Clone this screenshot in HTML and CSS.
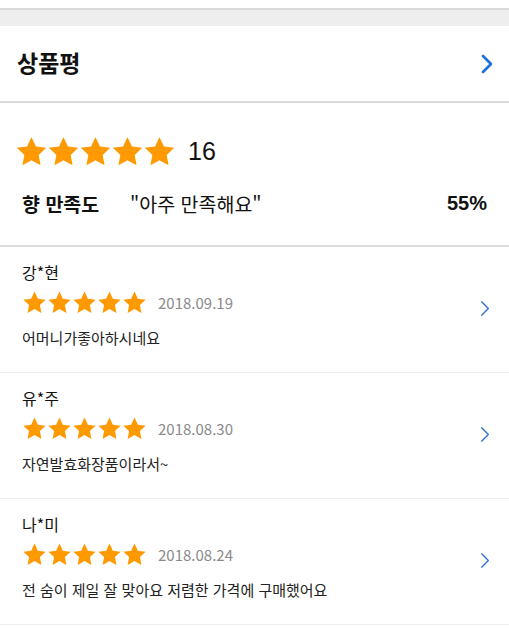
FILE: index.html
```html
<!DOCTYPE html>
<html lang="ko">
  <head>
    <meta charset="UTF-8" />
    <title>상품평</title>
    <link rel="stylesheet" href="styles.css">
  </head>
  <body>
    <div class="gap"></div>

    <a class="header">
      <h2>상품평</h2>
      <svg class="chev big" viewBox="0 0 12 20"><path d="M2 2 L10 10 L2 18" /></svg>
    </a>

    <div class="summary">
      <div class="score">
        <div class="stars big">
          <svg viewBox="0 0 24 24"><path d="M12 1.5l3.2 6.9 7.5.9-5.5 5.2 1.4 7.5L12 18.3 5.4 22l1.4-7.5L1.3 9.3l7.5-.9z"/></svg>
          <svg viewBox="0 0 24 24"><path d="M12 1.5l3.2 6.9 7.5.9-5.5 5.2 1.4 7.5L12 18.3 5.4 22l1.4-7.5L1.3 9.3l7.5-.9z"/></svg>
          <svg viewBox="0 0 24 24"><path d="M12 1.5l3.2 6.9 7.5.9-5.5 5.2 1.4 7.5L12 18.3 5.4 22l1.4-7.5L1.3 9.3l7.5-.9z"/></svg>
          <svg viewBox="0 0 24 24"><path d="M12 1.5l3.2 6.9 7.5.9-5.5 5.2 1.4 7.5L12 18.3 5.4 22l1.4-7.5L1.3 9.3l7.5-.9z"/></svg>
          <svg viewBox="0 0 24 24"><path d="M12 1.5l3.2 6.9 7.5.9-5.5 5.2 1.4 7.5L12 18.3 5.4 22l1.4-7.5L1.3 9.3l7.5-.9z"/></svg>
        </div>
        <span class="count">16</span>
      </div>
      <div class="scent">
        <span class="label">향 만족도</span>
        <span class="answer">"아주 만족해요"</span>
        <span class="pct">55%</span>
      </div>
    </div>

    <ul class="reviews">
      <li class="review">
        <div class="body">
          <p class="name">강*현</p>
          <div class="meta">
            <div class="stars">
              <svg viewBox="0 0 24 24"><path d="M12 1.5l3.2 6.9 7.5.9-5.5 5.2 1.4 7.5L12 18.3 5.4 22l1.4-7.5L1.3 9.3l7.5-.9z"/></svg>
              <svg viewBox="0 0 24 24"><path d="M12 1.5l3.2 6.9 7.5.9-5.5 5.2 1.4 7.5L12 18.3 5.4 22l1.4-7.5L1.3 9.3l7.5-.9z"/></svg>
              <svg viewBox="0 0 24 24"><path d="M12 1.5l3.2 6.9 7.5.9-5.5 5.2 1.4 7.5L12 18.3 5.4 22l1.4-7.5L1.3 9.3l7.5-.9z"/></svg>
              <svg viewBox="0 0 24 24"><path d="M12 1.5l3.2 6.9 7.5.9-5.5 5.2 1.4 7.5L12 18.3 5.4 22l1.4-7.5L1.3 9.3l7.5-.9z"/></svg>
              <svg viewBox="0 0 24 24"><path d="M12 1.5l3.2 6.9 7.5.9-5.5 5.2 1.4 7.5L12 18.3 5.4 22l1.4-7.5L1.3 9.3l7.5-.9z"/></svg>
            </div>
            <span class="date">2018.09.19</span>
          </div>
          <p class="text">어머니가좋아하시네요</p>
        </div>
        <svg class="chev" viewBox="0 0 12 20"><path d="M2 2 L10 10 L2 18" /></svg>
      </li>
      <li class="review">
        <div class="body">
          <p class="name">유*주</p>
          <div class="meta">
            <div class="stars">
              <svg viewBox="0 0 24 24"><path d="M12 1.5l3.2 6.9 7.5.9-5.5 5.2 1.4 7.5L12 18.3 5.4 22l1.4-7.5L1.3 9.3l7.5-.9z"/></svg>
              <svg viewBox="0 0 24 24"><path d="M12 1.5l3.2 6.9 7.5.9-5.5 5.2 1.4 7.5L12 18.3 5.4 22l1.4-7.5L1.3 9.3l7.5-.9z"/></svg>
              <svg viewBox="0 0 24 24"><path d="M12 1.5l3.2 6.9 7.5.9-5.5 5.2 1.4 7.5L12 18.3 5.4 22l1.4-7.5L1.3 9.3l7.5-.9z"/></svg>
              <svg viewBox="0 0 24 24"><path d="M12 1.5l3.2 6.9 7.5.9-5.5 5.2 1.4 7.5L12 18.3 5.4 22l1.4-7.5L1.3 9.3l7.5-.9z"/></svg>
              <svg viewBox="0 0 24 24"><path d="M12 1.5l3.2 6.9 7.5.9-5.5 5.2 1.4 7.5L12 18.3 5.4 22l1.4-7.5L1.3 9.3l7.5-.9z"/></svg>
            </div>
            <span class="date">2018.08.30</span>
          </div>
          <p class="text">자연발효화장품이라서~</p>
        </div>
        <svg class="chev" viewBox="0 0 12 20"><path d="M2 2 L10 10 L2 18" /></svg>
      </li>
      <li class="review">
        <div class="body">
          <p class="name">나*미</p>
          <div class="meta">
            <div class="stars">
              <svg viewBox="0 0 24 24"><path d="M12 1.5l3.2 6.9 7.5.9-5.5 5.2 1.4 7.5L12 18.3 5.4 22l1.4-7.5L1.3 9.3l7.5-.9z"/></svg>
              <svg viewBox="0 0 24 24"><path d="M12 1.5l3.2 6.9 7.5.9-5.5 5.2 1.4 7.5L12 18.3 5.4 22l1.4-7.5L1.3 9.3l7.5-.9z"/></svg>
              <svg viewBox="0 0 24 24"><path d="M12 1.5l3.2 6.9 7.5.9-5.5 5.2 1.4 7.5L12 18.3 5.4 22l1.4-7.5L1.3 9.3l7.5-.9z"/></svg>
              <svg viewBox="0 0 24 24"><path d="M12 1.5l3.2 6.9 7.5.9-5.5 5.2 1.4 7.5L12 18.3 5.4 22l1.4-7.5L1.3 9.3l7.5-.9z"/></svg>
              <svg viewBox="0 0 24 24"><path d="M12 1.5l3.2 6.9 7.5.9-5.5 5.2 1.4 7.5L12 18.3 5.4 22l1.4-7.5L1.3 9.3l7.5-.9z"/></svg>
            </div>
            <span class="date">2018.08.24</span>
          </div>
          <p class="text">전 숨이 제일 잘 맞아요 저렴한 가격에 구매했어요</p>
        </div>
        <svg class="chev" viewBox="0 0 12 20"><path d="M2 2 L10 10 L2 18" /></svg>
      </li>
    </ul>
  </body>
</html>
```

FILE: styles.css
```css
body {
  font-family: "Noto Sans CJK KR", "Liberation Sans", sans-serif;
  margin: 0;
  padding: 0;
  background: #fff;
  color: #111;
}

.gap {
  margin-top: 8px;
  height: 16px;
  background: #eeeeee;
  border-top: 2px solid #dadada;
}

.header {
  display: flex;
  align-items: center;
  justify-content: space-between;
  height: 77px;
  box-sizing: border-box;
  padding: 0 16px 4px 17px;
  border-bottom: 2px solid #d9d9d9;
}

.header h2 {
  margin: 0;
  font-size: 23px;
  font-weight: 700;
  color: #111;
}

.chev {
  width: 10px;
  height: 19px;
  fill: none;
  stroke: #2f6fd6;
  stroke-width: 1.6;
  stroke-linecap: round;
  stroke-linejoin: round;
}

.chev.big {
  width: 12px;
  height: 20px;
  margin-top: 4px;
  stroke: #1d6fdc;
  stroke-width: 2.6;
}

.summary {
  padding: 30px 22px 0 15px;
  height: 112px;
  border-bottom: 2px solid #dcdcdc;
}

.score {
  display: flex;
  align-items: center;
  height: 36px;
}

.stars {
  display: flex;
}

.stars svg {
  width: 25px;
  height: 25px;
  fill: #ff9900;
}

.stars.big svg {
  width: 33px;
  height: 33px;
  margin-right: -1px;
}

.count {
  margin-left: 13px;
  font-family: "Liberation Sans", sans-serif;
  font-size: 25px;
  color: #111;
}

.scent {
  display: flex;
  align-items: center;
  margin-top: 20px;
  padding-left: 7px;
  font-size: 19.5px;
}

.label {
  font-weight: 700;
  width: 108px;
}

.answer {
  flex: 1;
  font-weight: 400;
}

.pct {
  font-weight: 700;
  font-size: 20px;
  font-family: "Liberation Sans", sans-serif;
}

.reviews {
  list-style: none;
  margin: 0;
  padding: 0;
}

.review {
  display: flex;
  justify-content: space-between;
  height: 126px;
  box-sizing: border-box;
  padding: 14px 19px 0 22px;
  border-bottom: 1px solid #efefef;
}

.review .chev {
  margin-top: 38px;
}

.name {
  margin: 0;
  font-size: 16px;
  line-height: 22px;
}

.meta {
  display: flex;
  align-items: center;
  margin-top: 6px;
  height: 26px;
}

.date {
  margin-left: 11px;
  font-size: 15px;
  color: #8a8a8a;
}

.text {
  margin: 12px 0 0;
  font-size: 15px;
  line-height: 22px;
  color: #222;
}
```
